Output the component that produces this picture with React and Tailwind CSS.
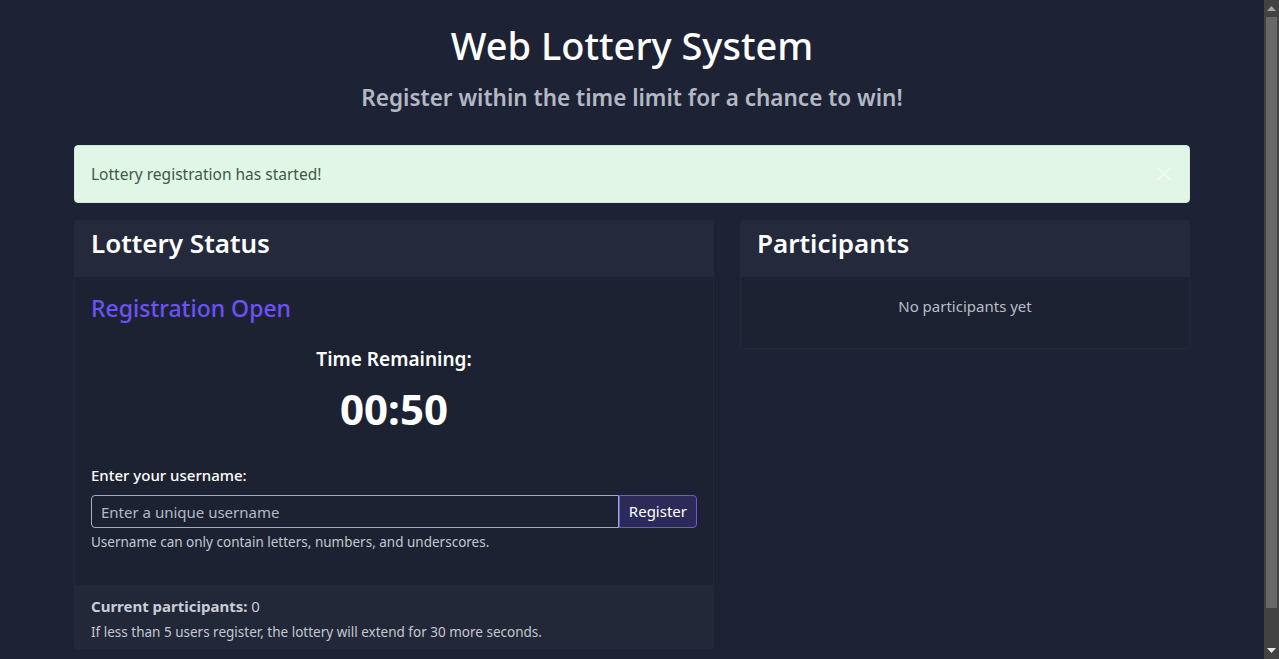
import React from 'react'

const font = { fontFamily: '"Noto Sans", "Liberation Sans", sans-serif' }

const Card = ({ title, children, footer, className = '' }) => (
  <div className={`rounded-[3px] border border-[#232939] bg-[#1d2232] ${className}`}>
    <div className="bg-[#242a3b] px-4 pb-[15px] pt-[3px]">
      <h2 className="text-[26px] font-semibold leading-[38px] text-white">{title}</h2>
    </div>
    {children}
    {footer}
  </div>
)

// Drawn scrollbar (dark scheme), the headless window has none of its own
const ScrollBar = () => (
  <div className="flex h-screen w-[15px] shrink-0 flex-col bg-[#424242]">
    <div className="flex h-[17px] items-center justify-center">
      <svg width="9" height="5" viewBox="0 0 9 5">
        <path d="M0 5L4.5 0L9 5Z" fill="#a3a3a3" />
      </svg>
    </div>
    <div className="mx-[2px] h-[591px] bg-[#686868]" />
    <div className="flex-1" />
    <div className="flex h-[17px] items-center justify-center">
      <svg width="9" height="5" viewBox="0 0 9 5">
        <path d="M0 0L4.5 5L9 0Z" fill="#e8e8e8" />
      </svg>
    </div>
  </div>
)

export default function App() {
  return (
    <div className="flex h-screen overflow-hidden bg-[#1d2334] text-[#e6e8ee]" style={font}>
      <div className="flex-1">
        <div className="mx-auto max-w-[1140px] px-3">
          {/* Header */}
          <div className="pt-[22px] text-center">
            <h1 className="text-[38px] font-medium leading-[46px] text-white">Web Lottery System</h1>
            <p className="mt-[14px] text-[22.5px] font-semibold leading-[32px] text-[#b3b8c4]">
              Register within the time limit for a chance to win!
            </p>
          </div>

          {/* Alert */}
          <div className="mt-[31px] flex items-center justify-between rounded-[4px] border border-[#cdebd5] bg-[#e1f6e6] px-4 py-[16px]">
            <span className="text-[15.5px] leading-6 text-[#3d5a48]">Lottery registration has started!</span>
            <svg width="16" height="16" viewBox="0 0 16 16" className="mr-px text-[#f4fbf6]">
              <path d="M2 2L14 14M14 2L2 14" stroke="currentColor" strokeWidth="1.6" />
            </svg>
          </div>

          {/* Columns */}
          <div className="mt-[17px] flex gap-[26px]">
            <Card
              title="Lottery Status"
              className="w-[640px]"
              footer={
                <div className="bg-[#232839] px-4 pb-[6px] pt-[9px]">
                  <p className="text-[15px] leading-6 text-[#c9cdd6]">
                    <span className="font-bold">Current participants:</span> 0
                  </p>
                  <p className="mt-[4px] text-[13.5px] leading-5 text-[#c3c7d0]">
                    If less than 5 users register, the lottery will extend for 30 more seconds.
                  </p>
                </div>
              }
            >
              <div className="px-4 pb-[33px] pt-[15px]">
                <h3 className="text-[23px] font-medium leading-[32px] text-[#6b52f5]">Registration Open</h3>
                <div className="mt-[21px] text-center">
                  <p className="text-[19px] font-semibold leading-[28px] text-white">Time Remaining:</p>
                  <p className="mt-[11px] text-[42px] font-bold leading-[50px] text-white">00:50</p>
                </div>
                <label className="mt-[29px] block text-[15px] font-medium leading-6 text-white">
                  Enter your username:
                </label>
                <div className="mt-[8px] flex">
                  <input
                    placeholder="Enter a unique username"
                    className="h-[33px] flex-1 rounded-l-[4px] border border-[#a9aebb] bg-[#1d2232] px-[9px] text-[15px] text-white placeholder:text-[#b5b9c4] outline-none"
                  />
                  <button className="h-[33px] rounded-r-[4px] border border-[#6b58e6] bg-[#2c2a58] px-[9px] text-[15px] text-white">
                    Register
                  </button>
                </div>
                <p className="mt-[4px] text-[13.5px] leading-5 text-[#c3c7d0]">
                  Username can only contain letters, numbers, and underscores.
                </p>
              </div>
            </Card>

            <Card title="Participants" className="h-[129px] w-[450px]">
              <div className="pt-[17px] text-center">
                <p className="text-[15px] leading-6 text-[#b8bdc8]">No participants yet</p>
              </div>
            </Card>
          </div>
        </div>
      </div>
      <ScrollBar />
    </div>
  )
}
